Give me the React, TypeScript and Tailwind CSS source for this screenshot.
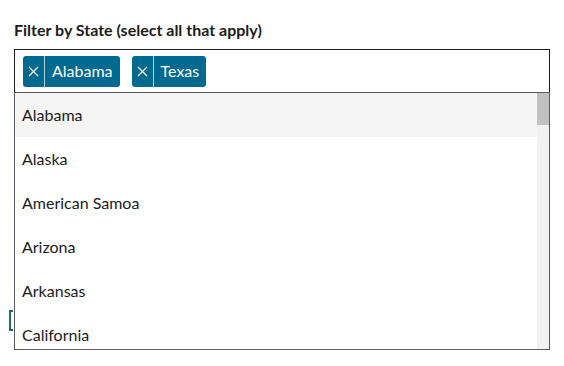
import React from "react";

const states = ["Alabama", "Alaska", "American Samoa", "Arizona", "Arkansas", "California"];
const chips = ["Alabama", "Texas"];

export default function App() {
  return (
    <div className="relative w-[564px] h-[366px] bg-white text-[#1b1b1b]" style={{ fontFamily: "Lato, 'Open Sans', sans-serif" }}>
      {/* something behind the dropdown */}
      <div className="absolute left-[9px] top-[310px] w-[4px] h-[21px] border-l-2 border-y-2 border-[#1f6f68]"></div>

      <div className="px-[14px] pt-[19px]">
        <label className="block text-[16px] font-bold leading-[22px] mb-[8px]">
          Filter by State (select all that apply)
        </label>

        <div className="relative">
          {/* INPUT WITH CHIPS */}
          <div className="flex items-center gap-[12px] h-[44px] border border-[#1b1b1b] px-[8px]">
            {chips.map((c) => (
              <div key={c} className="flex items-center h-[31px] rounded-[3px] bg-[#00698f] text-white">
                <span className="flex items-center justify-center w-[22px] h-full border-r border-white/70">
                  <svg width="11" height="11" viewBox="0 0 11 11" stroke="white" strokeWidth="1.2">
                    <path d="M1 1 L10 10 M10 1 L1 10" />
                  </svg>
                </span>
                <span className="px-[7px] text-[16px] leading-none">{c}</span>
              </div>
            ))}
          </div>

          {/* DROPDOWN LIST */}
          <div className="absolute left-0 top-[43px] w-full h-[258px] flex bg-white border border-[#565c65] overflow-hidden">
            <div className="flex-1 flex flex-col">
              {states.map((s, i) => (
                <div
                  key={s}
                  className={`flex items-center h-[44px] shrink-0 pl-[7px] text-[16px] text-[#1b1b1b] ${i === 0 ? "bg-[#f5f5f5]" : ""}`}
                >
                  {s}
                </div>
              ))}
            </div>
            <div className="w-[12px] bg-[#f1f1f1]">
              <div className="h-[32px] bg-[#c1c1c1]"></div>
            </div>
          </div>
        </div>
      </div>
    </div>
  );
}
